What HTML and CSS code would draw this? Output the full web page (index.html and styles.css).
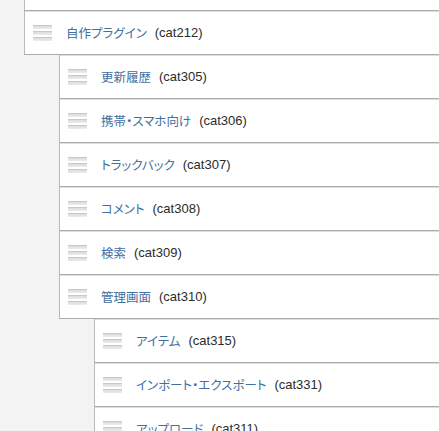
FILE: index.html
```html
<!DOCTYPE html>
<html lang="ja">
<head>
<meta charset="utf-8">
<title>カテゴリ</title>
<link rel="stylesheet" href="styles.css">
</head>
<body>
<ul class="tree top">
  <li class="item"><div class="row row-tail"></div></li>
  <li class="item">
    <div class="row"><span class="handle"></span><a class="name" href="#">自作プラグイン</a><span class="cid">(cat212)</span></div>
    <ul class="tree sub">
      <li class="item"><div class="row"><span class="handle"></span><a class="name" href="#">更新履歴</a><span class="cid">(cat305)</span></div></li>
      <li class="item"><div class="row"><span class="handle"></span><a class="name" href="#">携帯・スマホ向け</a><span class="cid">(cat306)</span></div></li>
      <li class="item"><div class="row"><span class="handle"></span><a class="name" href="#">トラックバック</a><span class="cid">(cat307)</span></div></li>
      <li class="item"><div class="row"><span class="handle"></span><a class="name" href="#">コメント</a><span class="cid">(cat308)</span></div></li>
      <li class="item"><div class="row"><span class="handle"></span><a class="name" href="#">検索</a><span class="cid">(cat309)</span></div></li>
      <li class="item">
        <div class="row"><span class="handle"></span><a class="name" href="#">管理画面</a><span class="cid">(cat310)</span></div>
        <ul class="tree sub">
          <li class="item"><div class="row"><span class="handle"></span><a class="name" href="#">アイテム</a><span class="cid">(cat315)</span></div></li>
          <li class="item"><div class="row"><span class="handle"></span><a class="name" href="#">インポート・エクスポート</a><span class="cid">(cat331)</span></div></li>
          <li class="item"><div class="row"><span class="handle"></span><a class="name" href="#">アップロード</a><span class="cid">(cat311)</span></div></li>
        </ul>
      </li>
    </ul>
  </li>
</ul>
</body>
</html>
```

FILE: styles.css
```css
html, body {
  margin: 0;
  padding: 0;
  background: #f3f3f3;
  overflow: hidden;
}
body {
  font-family: "Liberation Sans", "Noto Sans CJK JP", sans-serif;
  font-size: 13px;
  color: #333;
}
.tree {
  list-style: none;
  margin: 0;
  padding: 0;
}
.top {
  margin-left: 24px;
}
.sub {
  margin-left: 35px;
}
.row {
  display: flex;
  align-items: center;
  height: 43px;
  background: #fff;
  border-left: 1px solid #b9b9b9;
  border-bottom: 1px solid #ababab;
  box-shadow: inset 0 1px 0 #dedede;
  padding-left: 8px;
}
.row-tail {
  height: 10px;
  box-shadow: none;
}
.handle {
  width: 19px;
  height: 16px;
  flex: none;
  margin-right: 14px;
  margin-top: 1px;
  background-image:
    linear-gradient(#c9c9c9 0, #c9c9c9 1px, #dcdcdc 1px, #ececec 4px, transparent 4px),
    linear-gradient(#c9c9c9 0, #c9c9c9 1px, #dcdcdc 1px, #ececec 4px, transparent 4px),
    linear-gradient(#c9c9c9 0, #c9c9c9 1px, #dcdcdc 1px, #ececec 4px, transparent 4px);
  background-size: 19px 4px;
  background-repeat: no-repeat;
  background-position: 0 0, 0 6px, 0 12px;
}
.name {
  color: #41709e;
  text-decoration: none;
  font-family: "Noto Sans CJK JP", sans-serif;
  font-size: 12.5px;
  font-feature-settings: "palt";
  font-weight: 400;
}
.cid {
  margin-left: 8px;
  color: #2b2b2b;
  font-family: "Liberation Sans", sans-serif;
}
```
